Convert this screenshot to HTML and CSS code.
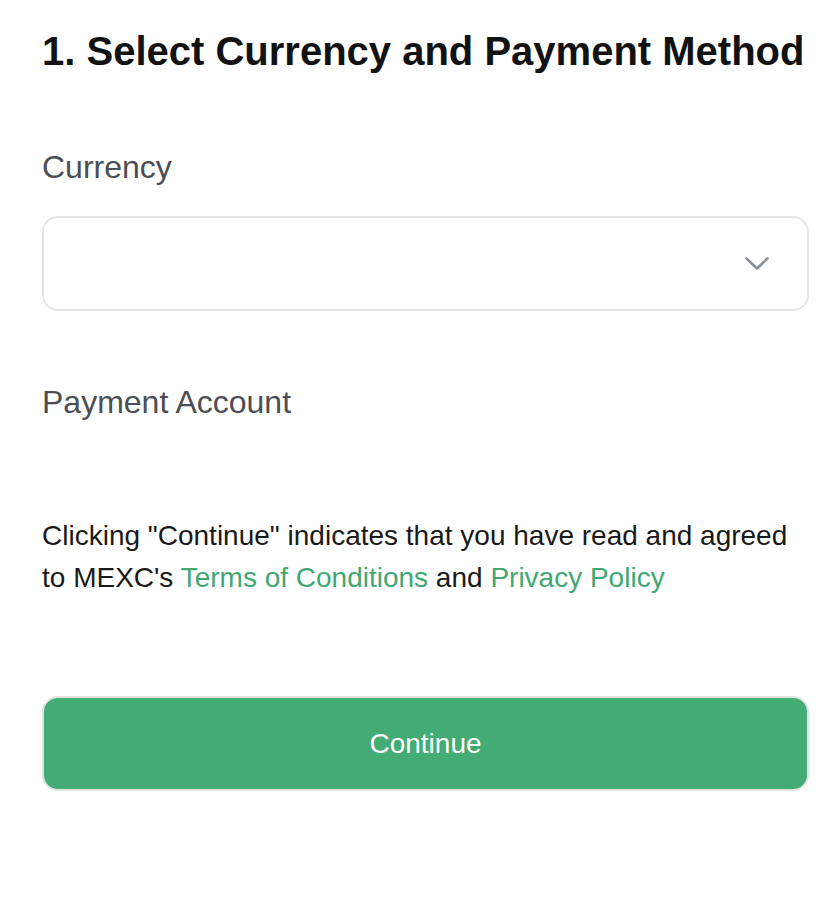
FILE: index.html
```html
<!DOCTYPE html>
<html>
<head>
<meta charset="utf-8">
<link rel="stylesheet" href="styles.css">
</head>
<body>
<div class="page">
  <h1 class="title">1. Select Currency and Payment Method</h1>
  <div class="label label-currency">Currency</div>
  <div class="select">
    <svg class="chevron" width="24" height="13" viewBox="0 0 24 13"><path d="M1.5 1.5 L12 11.5 L22.5 1.5" fill="none" stroke="#8b9197" stroke-width="2.6" stroke-linecap="round" stroke-linejoin="round"/></svg>
  </div>
  <div class="label label-payment">Payment Account</div>
  <p class="terms">Clicking "Continue" indicates that you have read and agreed to MEXC's <a class="link">Terms of Conditions</a> and <a class="link">Privacy Policy</a></p>
  <button class="btn">Continue</button>
</div>
</body>
</html>
```
FILE: styles.css
```css
html, body { margin: 0; padding: 0; background: #fff; }
body { font-family: "Liberation Sans", Arial, sans-serif; }
.page { width: 767px; margin-left: 42px; padding-top: 25px; }
.title { margin: 0; font-size: 40px; font-weight: 700; color: #121212; line-height: 52px; white-space: nowrap; }
.label { font-size: 32px; color: #4b4e54; line-height: 40px; }
.label-currency { margin-top: 70px; }
.select { margin-top: 29px; height: 91px; border: 2px solid #e6e6e6; border-radius: 16px; display: flex; align-items: center; justify-content: flex-end; padding-right: 38px; }
.label-payment { margin-top: 71px; }
.terms { margin: 93px 0 0; font-size: 28px; line-height: 42px; color: #1a1a1a; }
.link { color: #41a872; text-decoration: none; }
.btn { display: flex; align-items: center; justify-content: center; width: 767px; margin-top: 97px; height: 95px; background: #42ac74; border: 2px solid #e2e2e2; border-radius: 16px; color: #fff; font-family: "Liberation Sans", Arial, sans-serif; font-size: 28px; padding: 0; }
```
